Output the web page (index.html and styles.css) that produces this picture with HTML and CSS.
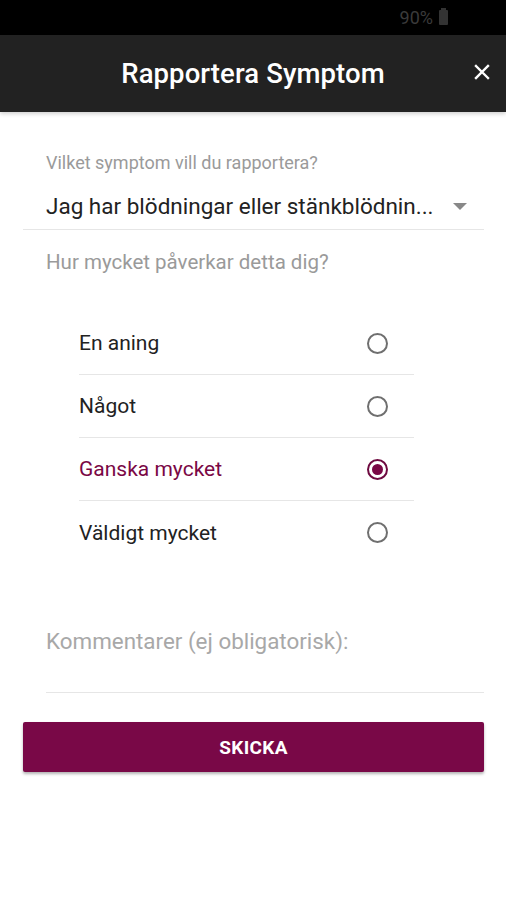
FILE: index.html
```html
<!DOCTYPE html>
<html>
<head>
<meta charset="utf-8">
<link rel="stylesheet" href="styles.css">
</head>
<body>
<div class="status">
  <span class="pct">90%</span>
  <span class="battery"></span>
</div>
<header class="bar">
  <h1 class="title">Rapportera Symptom</h1>
  <span class="close">
    <svg width="16" height="16" viewBox="0 0 16 16"><path d="M2 2L14 14M14 2L2 14" stroke="#fff" stroke-width="2.4" stroke-linecap="square"/></svg>
  </span>
</header>
<main class="content">
  <div class="field-label">Vilket symptom vill du rapportera?</div>
  <div class="select">
    <span class="select-text">Jag har blödningar eller stänkblödnin...</span>
    <svg class="arrow" width="14" height="7" viewBox="0 0 14 7"><path d="M0 0H14L7 7Z" fill="#888"/></svg>
  </div>
  <div class="field-label q2">Hur mycket påverkar detta dig?</div>
  <ul class="options">
    <li class="opt"><span>En aning</span><span class="radio"></span></li>
    <li class="opt"><span>Något</span><span class="radio"></span></li>
    <li class="opt selected"><span>Ganska mycket</span><span class="radio on"></span></li>
    <li class="opt"><span>Väldigt mycket</span><span class="radio"></span></li>
  </ul>
  <div class="comment">Kommentarer (ej obligatorisk):</div>
  <div class="comment-line"></div>
  <button class="submit">SKICKA</button>
</main>
</body>
</html>
```
FILE: styles.css
```css
* { box-sizing: border-box; }
html, body { margin: 0; padding: 0; }
body {
  width: 506px;
  height: 900px;
  background: #fff;
  font-family: Roboto, "Noto Sans", sans-serif;
  overflow: hidden;
}
.status {
  height: 35px;
  background: #000;
  display: flex;
  align-items: center;
  justify-content: flex-end;
  padding-right: 58px;
  gap: 6px;
}
.pct {
  color: #3a3a3a;
  font-size: 18px;
}
.battery {
  width: 9px;
  height: 15px;
  background: #333;
  border-radius: 1px;
  position: relative;
}
.battery::before {
  content: "";
  position: absolute;
  top: -2px;
  left: 2px;
  width: 5px;
  height: 2px;
  background: #333;
}
.bar {
  height: 77px;
  background: #222;
  display: flex;
  align-items: center;
  justify-content: center;
  position: relative;
  box-shadow: 0 2px 4px rgba(0,0,0,0.18);
}
.title {
  margin: 0;
  color: #fff;
  font-size: 27.5px;
  font-weight: 500;
  letter-spacing: 0.1px;
}
.close {
  position: absolute;
  right: 16px;
  top: 29px;
  width: 16px;
  height: 16px;
  display: flex;
}
.content {
  padding: 0 22px 0 23px;
}
.field-label {
  color: #9a9a9a;
  font-size: 18px;
  padding-left: 23px;
  margin-top: 39px;
  line-height: 24px;
}
.select {
  display: flex;
  align-items: center;
  justify-content: space-between;
  height: 55px;
  padding: 8px 17px 0 23px;
  border-bottom: 1px solid #e6e6e6;
}
.select-text {
  font-size: 22.5px;
  color: #222;
}
.field-label.q2 {
  margin-top: 19px;
  font-size: 20.5px;
  line-height: 26px;
}
.options {
  list-style: none;
  margin: 37px 70px 0 56px;
  padding: 0;
}
.opt {
  display: flex;
  align-items: center;
  justify-content: space-between;
  height: 63px;
  font-size: 21px;
  color: #222;
  padding-right: 26px;
  border-bottom: 1px solid #e6e6e6;
}
.opt:last-child { border-bottom: none; }
.opt.selected { color: #7a0745; }
.radio {
  width: 21px;
  height: 21px;
  border: 2px solid #6f6f6f;
  border-radius: 50%;
  display: flex;
  align-items: center;
  justify-content: center;
}
.radio.on {
  border-color: #6e0a40;
}
.radio.on::after {
  content: "";
  width: 11px;
  height: 11px;
  border-radius: 50%;
  background: #7a0745;
}
.comment {
  margin-top: 63px;
  padding-left: 23px;
  color: #a8a8a8;
  font-size: 22.4px;
  line-height: 28px;
}
.comment-line {
  margin: 37px 0 0 23px;
  height: 1px;
  background: #e6e6e6;
}
.submit {
  display: block;
  width: 100%;
  margin-top: 29px;
  height: 50px;
  border: none;
  border-radius: 2px;
  background: #790847;
  color: #fff;
  font-family: Roboto, "Noto Sans", sans-serif;
  font-size: 19px;
  font-weight: 700;
  letter-spacing: 0.3px;
  box-shadow: 0 2px 3px rgba(0,0,0,0.3);
}
```
